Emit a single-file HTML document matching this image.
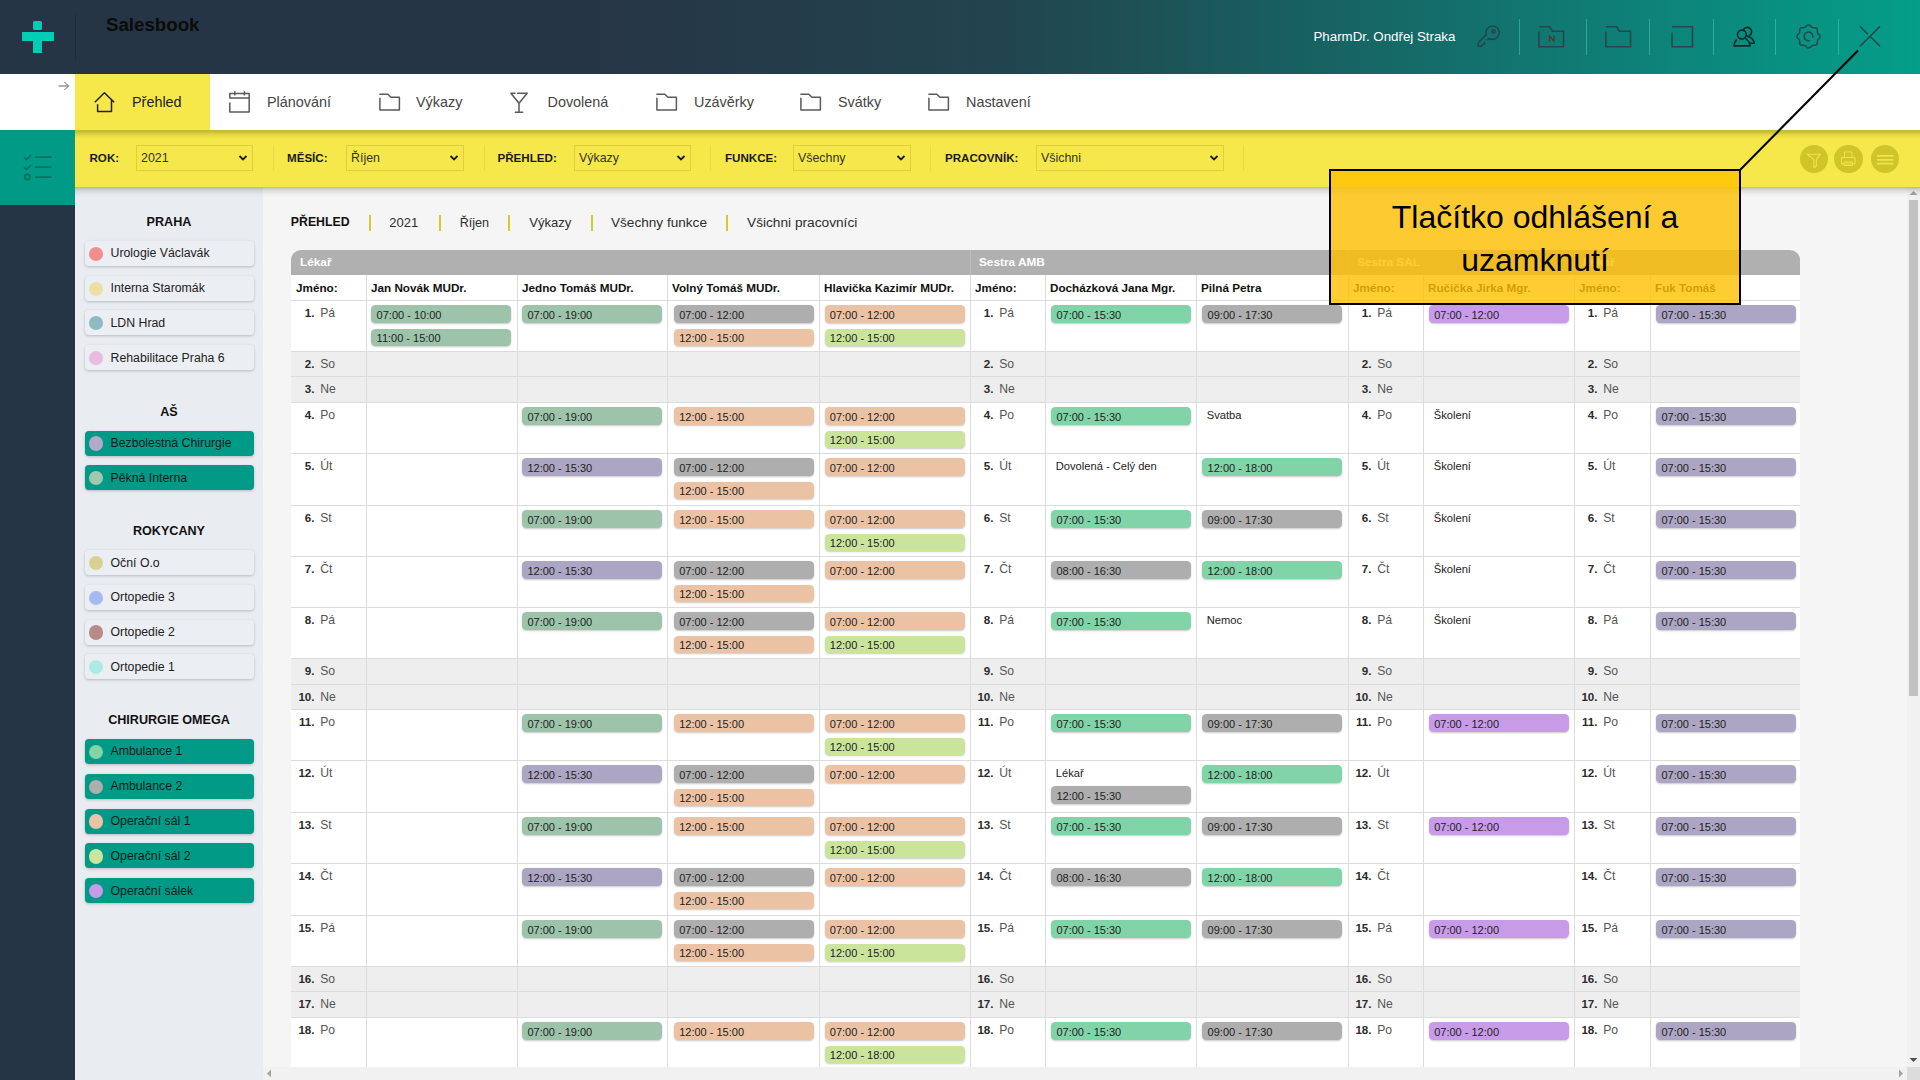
<!DOCTYPE html><html><head><meta charset="utf-8"><style>
*{box-sizing:border-box;margin:0;padding:0}
html,body{width:1920px;height:1080px;overflow:hidden;background:#f5f5f5;font-family:"Liberation Sans", sans-serif;}
.a{position:absolute}
.t{position:absolute;white-space:nowrap;line-height:1}
</style></head><body><div class="a" style="left:0;top:0;width:1920px;height:74px;background:linear-gradient(90deg,#263545 0%,#263545 31%,#22444e 52%,#186060 67.7%,#0f7d75 83.3%,#049e89 100%)"></div><div class="a" style="left:33.1px;top:20.5px;width:9.3px;height:9.4px;border-radius:1.5px;background:#00cdb3"></div><div class="a" style="left:22px;top:32.2px;width:31.8px;height:8.9px;background:#00cdb3"></div><div class="a" style="left:33.1px;top:41px;width:9.3px;height:11.6px;background:#00cdb3"></div><div class="a" style="left:75px;top:14px;width:1px;height:46px;background:#1f2d3b"></div><div class="t" style="left:106px;top:15.5px;font-size:18.7px;font-weight:700;color:#0b0b0b">Salesbook</div><div class="a" style="left:0;top:74px;width:1920px;height:56px;background:#fff"></div><div class="a" style="left:75px;top:74px;width:135px;height:56px;background:#f6e84a"></div><svg class="a" style="left:57px;top:80px" width="13" height="12" viewBox="0 0 13 12"><path d="M1.5 6 H11.5 M7.5 2 L11.5 6 L7.5 10" fill="none" stroke="#666" stroke-width="1"/></svg><svg class="a" style="left:94px;top:91px" width="22" height="22" viewBox="0 0 22 22"><path d="M0.8 11.3 L10.4 1.8 L20.2 11.3 M3.6 13.2 V20.4 H17.5 V9.3" fill="none" stroke="#222" stroke-width="1.5" stroke-linejoin="round"/></svg><div class="t" style="left:132px;top:95px;font-size:14.4px;color:#222">Přehled</div><svg class="a" style="left:229px;top:90px" width="22" height="24" viewBox="0 0 22 24"><path d="M0.8 12.6 V22.1 H20.2 V3.4 H0.8 V8.1 H20.2 M5.8 1.2 V5.4 M15.4 1.2 V5.4" fill="none" stroke="#5a5a5a" stroke-width="1.5" stroke-linejoin="round"/></svg><div class="t" style="left:267px;top:95px;font-size:14.4px;color:#444">Plánování</div><svg class="a" style="left:379px;top:93px" width="22" height="18" viewBox="0 0 22 18"><path d="M0.9 1.3 H8.9 L11.9 4.2 H20.4 V16.9 H0.9 V5.2" fill="none" stroke="#5a5a5a" stroke-width="1.5" stroke-linejoin="round" stroke-linecap="round"/></svg><div class="t" style="left:416px;top:95px;font-size:14.4px;color:#444">Výkazy</div><svg class="a" style="left:510px;top:91px" width="20" height="22" viewBox="0 0 20 22"><path d="M4.9 2.2 H0.9 L9 12.3 L17.2 2.2 H7.6 M9 12.3 V21.2 M5.4 21.2 H12.7" fill="none" stroke="#5a5a5a" stroke-width="1.5" stroke-linejoin="round" stroke-linecap="round"/></svg><div class="t" style="left:547.5px;top:95px;font-size:14.4px;color:#444">Dovolená</div><svg class="a" style="left:656px;top:93px" width="22" height="18" viewBox="0 0 22 18"><path d="M0.9 1.3 H8.9 L11.9 4.2 H20.4 V16.9 H0.9 V5.2" fill="none" stroke="#5a5a5a" stroke-width="1.5" stroke-linejoin="round" stroke-linecap="round"/></svg><div class="t" style="left:694px;top:95px;font-size:14.4px;color:#444">Uzávěrky</div><svg class="a" style="left:800px;top:93px" width="22" height="18" viewBox="0 0 22 18"><path d="M0.9 1.3 H8.9 L11.9 4.2 H20.4 V16.9 H0.9 V5.2" fill="none" stroke="#5a5a5a" stroke-width="1.5" stroke-linejoin="round" stroke-linecap="round"/></svg><div class="t" style="left:838px;top:95px;font-size:14.4px;color:#444">Svátky</div><svg class="a" style="left:928px;top:93px" width="22" height="18" viewBox="0 0 22 18"><path d="M0.9 1.3 H8.9 L11.9 4.2 H20.4 V16.9 H0.9 V5.2" fill="none" stroke="#5a5a5a" stroke-width="1.5" stroke-linejoin="round" stroke-linecap="round"/></svg><div class="t" style="left:966px;top:95px;font-size:14.4px;color:#444">Nastavení</div><div class="a" style="left:75px;top:130px;width:1845px;height:57px;background:#f6e84a"></div><div class="a" style="left:75px;top:130px;width:1845px;height:9px;background:linear-gradient(rgba(80,70,0,0.30) 0%,rgba(80,70,0,0.26) 20%,rgba(80,70,0,0.10) 55%,rgba(80,70,0,0) 100%)"></div><div class="a" style="left:0;top:130px;width:75px;height:75px;background:#009a87"></div><svg class="a" style="left:20px;top:150px" width="36" height="34" viewBox="0 0 36 34"><g fill="none" stroke="#067062" stroke-width="1.75"><path d="M4 7 L6.5 9.5 L11 5"/><path d="M4 17 L6.5 19.5 L11 15"/><circle cx="7.3" cy="27" r="2.6"/><path d="M15 7 H31.5 M15 17 H31.5 M15 27 H31.5"/></g></svg><div class="t" style="left:89.5px;top:152px;font-size:11.6px;font-weight:700;color:#1a1a1a">ROK:</div><div class="t" style="left:287px;top:152px;font-size:11.6px;font-weight:700;color:#1a1a1a">MĚSÍC:</div><div class="t" style="left:497.5px;top:152px;font-size:11.6px;font-weight:700;color:#1a1a1a">PŘEHLED:</div><div class="t" style="left:725px;top:152px;font-size:11.6px;font-weight:700;color:#1a1a1a">FUNKCE:</div><div class="t" style="left:945px;top:152px;font-size:11.6px;font-weight:700;color:#1a1a1a">PRACOVNÍK:</div><div class="a" style="left:136px;top:145px;width:117px;height:26px;border:1px solid #ddd03c"></div><div class="t" style="left:141px;top:152px;font-size:12.4px;color:#333">2021</div><svg class="a" style="left:238px;top:154px" width="10" height="8" viewBox="0 0 10 8"><path d="M1.5 2 L5 5.5 L8.5 2" fill="none" stroke="#1a1a1a" stroke-width="1.8"/></svg><div class="a" style="left:346px;top:145px;width:118px;height:26px;border:1px solid #ddd03c"></div><div class="t" style="left:351px;top:152px;font-size:12.4px;color:#333">Říjen</div><svg class="a" style="left:449px;top:154px" width="10" height="8" viewBox="0 0 10 8"><path d="M1.5 2 L5 5.5 L8.5 2" fill="none" stroke="#1a1a1a" stroke-width="1.8"/></svg><div class="a" style="left:574px;top:145px;width:117px;height:26px;border:1px solid #ddd03c"></div><div class="t" style="left:579px;top:152px;font-size:12.4px;color:#333">Výkazy</div><svg class="a" style="left:676px;top:154px" width="10" height="8" viewBox="0 0 10 8"><path d="M1.5 2 L5 5.5 L8.5 2" fill="none" stroke="#1a1a1a" stroke-width="1.8"/></svg><div class="a" style="left:793px;top:145px;width:117.5px;height:26px;border:1px solid #ddd03c"></div><div class="t" style="left:798px;top:152px;font-size:12.4px;color:#333">Všechny</div><svg class="a" style="left:895.5px;top:154px" width="10" height="8" viewBox="0 0 10 8"><path d="M1.5 2 L5 5.5 L8.5 2" fill="none" stroke="#1a1a1a" stroke-width="1.8"/></svg><div class="a" style="left:1036px;top:145px;width:188px;height:26px;border:1px solid #ddd03c"></div><div class="t" style="left:1041px;top:152px;font-size:12.4px;color:#333">Všichni</div><svg class="a" style="left:1209px;top:154px" width="10" height="8" viewBox="0 0 10 8"><path d="M1.5 2 L5 5.5 L8.5 2" fill="none" stroke="#1a1a1a" stroke-width="1.8"/></svg><div class="a" style="left:272.5px;top:145px;width:1px;height:26px;background:#e8da45"></div><div class="a" style="left:483.75px;top:145px;width:1px;height:26px;background:#e8da45"></div><div class="a" style="left:709.5px;top:145px;width:1px;height:26px;background:#e8da45"></div><div class="a" style="left:930px;top:145px;width:1px;height:26px;background:#e8da45"></div><div class="a" style="left:1243px;top:145px;width:1px;height:26px;background:#e8da45"></div><div class="a" style="left:1799.5px;top:144.60000000000002px;width:28.4px;height:28.4px;border-radius:50%;background:#cfc42a"></div><div class="a" style="left:1834.3999999999999px;top:144.60000000000002px;width:28.4px;height:28.4px;border-radius:50%;background:#cfc42a"></div><div class="a" style="left:1870.8px;top:144.60000000000002px;width:28.4px;height:28.4px;border-radius:50%;background:#cfc42a"></div><svg class="a" style="left:1799.5px;top:144.6px" width="28.4" height="28.4" viewBox="0 0 28.4 28.4"><path d="M7.2 9.2 H20.3 L16.3 14.6 V21.3 L13.9 22.4 V14.6 Z" fill="none" stroke="#f1e44a" stroke-width="1.1" stroke-linejoin="round"/></svg><svg class="a" style="left:1834.4px;top:144.6px" width="28.4" height="28.4" viewBox="0 0 28.4 28.4"><path d="M10.5 13 V7 H18 V13 M7.5 15.5 V12.5 H21 V19 H7.5 V15.5 M10 17 H18.5 V20.5 H10 Z" fill="none" stroke="#f1e44a" stroke-width="1"/></svg><svg class="a" style="left:1870.8px;top:144.6px" width="28.4" height="28.4" viewBox="0 0 28.4 28.4"><path d="M6 10.9 H22.5 M6 14.8 H22.5 M6 18.7 H22.5" fill="none" stroke="#f1e44a" stroke-width="1.7"/></svg><div class="a" style="left:0;top:205px;width:75px;height:875px;background:#263545"></div><div class="a" style="left:75px;top:187px;width:188px;height:893px;background:#e9edf1"></div><div class="t" style="left:75px;width:188px;text-align:center;top:215.8px;font-size:12.6px;font-weight:700;color:#111">PRAHA</div><div class="a" style="left:85px;top:240.8px;width:168.5px;height:25px;border-radius:4px;background:#ebeef2;box-shadow:0 1px 3px rgba(0,0,0,0.22)"></div><div class="a" style="left:89px;top:246.60000000000002px;width:14.4px;height:14.4px;border-radius:50%;background:#f38c8c"></div><div class="t" style="left:110.5px;top:247.3px;font-size:12.3px;color:#222">Urologie Václavák</div><div class="a" style="left:85px;top:275.7px;width:168.5px;height:25px;border-radius:4px;background:#ebeef2;box-shadow:0 1px 3px rgba(0,0,0,0.22)"></div><div class="a" style="left:89px;top:281.5px;width:14.4px;height:14.4px;border-radius:50%;background:#ebe0a2"></div><div class="t" style="left:110.5px;top:282.2px;font-size:12.3px;color:#222">Interna Staromák</div><div class="a" style="left:85px;top:310.1px;width:168.5px;height:25px;border-radius:4px;background:#ebeef2;box-shadow:0 1px 3px rgba(0,0,0,0.22)"></div><div class="a" style="left:89px;top:315.90000000000003px;width:14.4px;height:14.4px;border-radius:50%;background:#8fbac1"></div><div class="t" style="left:110.5px;top:316.6px;font-size:12.3px;color:#222">LDN Hrad</div><div class="a" style="left:85px;top:345.0px;width:168.5px;height:25px;border-radius:4px;background:#ebeef2;box-shadow:0 1px 3px rgba(0,0,0,0.22)"></div><div class="a" style="left:89px;top:350.8px;width:14.4px;height:14.4px;border-radius:50%;background:#e8bbdf"></div><div class="t" style="left:110.5px;top:351.5px;font-size:12.3px;color:#222">Rehabilitace Praha 6</div><div class="t" style="left:75px;width:188px;text-align:center;top:405.5px;font-size:12.6px;font-weight:700;color:#111">AŠ</div><div class="a" style="left:85px;top:430.5px;width:168.5px;height:25px;border-radius:4px;background:#009a87;box-shadow:0 1px 3px rgba(0,0,0,0.22)"></div><div class="a" style="left:89px;top:436.3px;width:14.4px;height:14.4px;border-radius:50%;background:#b2a9c9"></div><div class="t" style="left:110.5px;top:437.0px;font-size:12.3px;color:#081c18">Bezbolestná Chirurgie</div><div class="a" style="left:85px;top:465.1px;width:168.5px;height:25px;border-radius:4px;background:#009a87;box-shadow:0 1px 3px rgba(0,0,0,0.22)"></div><div class="a" style="left:89px;top:470.90000000000003px;width:14.4px;height:14.4px;border-radius:50%;background:#a3c6ae"></div><div class="t" style="left:110.5px;top:471.6px;font-size:12.3px;color:#081c18">Pěkná Interna</div><div class="t" style="left:75px;width:188px;text-align:center;top:525.0px;font-size:12.6px;font-weight:700;color:#111">ROKYCANY</div><div class="a" style="left:85px;top:550.0px;width:168.5px;height:25px;border-radius:4px;background:#ebeef2;box-shadow:0 1px 3px rgba(0,0,0,0.22)"></div><div class="a" style="left:89px;top:555.8px;width:14.4px;height:14.4px;border-radius:50%;background:#d9d18f"></div><div class="t" style="left:110.5px;top:556.5px;font-size:12.3px;color:#222">Oční O.o</div><div class="a" style="left:85px;top:584.7px;width:168.5px;height:25px;border-radius:4px;background:#ebeef2;box-shadow:0 1px 3px rgba(0,0,0,0.22)"></div><div class="a" style="left:89px;top:590.5px;width:14.4px;height:14.4px;border-radius:50%;background:#a6baf0"></div><div class="t" style="left:110.5px;top:591.2px;font-size:12.3px;color:#222">Ortopedie 3</div><div class="a" style="left:85px;top:619.5px;width:168.5px;height:25px;border-radius:4px;background:#ebeef2;box-shadow:0 1px 3px rgba(0,0,0,0.22)"></div><div class="a" style="left:89px;top:625.3px;width:14.4px;height:14.4px;border-radius:50%;background:#b98a8a"></div><div class="t" style="left:110.5px;top:626.0px;font-size:12.3px;color:#222">Ortopedie 2</div><div class="a" style="left:85px;top:654.0px;width:168.5px;height:25px;border-radius:4px;background:#ebeef2;box-shadow:0 1px 3px rgba(0,0,0,0.22)"></div><div class="a" style="left:89px;top:659.8px;width:14.4px;height:14.4px;border-radius:50%;background:#aaece1"></div><div class="t" style="left:110.5px;top:660.5px;font-size:12.3px;color:#222">Ortopedie 1</div><div class="t" style="left:75px;width:188px;text-align:center;top:713.8px;font-size:12.6px;font-weight:700;color:#111">CHIRURGIE OMEGA</div><div class="a" style="left:85px;top:738.8px;width:168.5px;height:25px;border-radius:4px;background:#009a87;box-shadow:0 1px 3px rgba(0,0,0,0.22)"></div><div class="a" style="left:89px;top:744.5999999999999px;width:14.4px;height:14.4px;border-radius:50%;background:#82d4a8"></div><div class="t" style="left:110.5px;top:745.3px;font-size:12.3px;color:#081c18">Ambulance 1</div><div class="a" style="left:85px;top:773.7px;width:168.5px;height:25px;border-radius:4px;background:#009a87;box-shadow:0 1px 3px rgba(0,0,0,0.22)"></div><div class="a" style="left:89px;top:779.5px;width:14.4px;height:14.4px;border-radius:50%;background:#aeaeae"></div><div class="t" style="left:110.5px;top:780.2px;font-size:12.3px;color:#081c18">Ambulance 2</div><div class="a" style="left:85px;top:808.6px;width:168.5px;height:25px;border-radius:4px;background:#009a87;box-shadow:0 1px 3px rgba(0,0,0,0.22)"></div><div class="a" style="left:89px;top:814.4px;width:14.4px;height:14.4px;border-radius:50%;background:#ecc3a6"></div><div class="t" style="left:110.5px;top:815.1px;font-size:12.3px;color:#081c18">Operační sál 1</div><div class="a" style="left:85px;top:843.4px;width:168.5px;height:25px;border-radius:4px;background:#009a87;box-shadow:0 1px 3px rgba(0,0,0,0.22)"></div><div class="a" style="left:89px;top:849.1999999999999px;width:14.4px;height:14.4px;border-radius:50%;background:#cbe59d"></div><div class="t" style="left:110.5px;top:849.9px;font-size:12.3px;color:#081c18">Operační sál 2</div><div class="a" style="left:85px;top:878.1px;width:168.5px;height:25px;border-radius:4px;background:#009a87;box-shadow:0 1px 3px rgba(0,0,0,0.22)"></div><div class="a" style="left:89px;top:883.9px;width:14.4px;height:14.4px;border-radius:50%;background:#c99ce9"></div><div class="t" style="left:110.5px;top:884.6px;font-size:12.3px;color:#081c18">Operační sálek</div><div class="a" style="left:1907px;top:187px;width:13px;height:880px;background:#f1f1f1"></div><div class="a" style="left:1909px;top:200px;width:9px;height:496px;background:#c1c1c1"></div><svg class="a" style="left:1909px;top:189px" width="9" height="8" viewBox="0 0 9 8"><path d="M0.5 6 L4.5 2 L8.5 6 Z" fill="#a3a3a3"/></svg><svg class="a" style="left:1909px;top:1056px" width="9" height="8" viewBox="0 0 9 8"><path d="M0.5 2 L4.5 6 L8.5 2 Z" fill="#505050"/></svg><div class="a" style="left:263px;top:1067px;width:1644px;height:13px;background:#f1f1f1"></div><div class="a" style="left:1907px;top:1067px;width:13px;height:13px;background:#dcdcdc"></div><svg class="a" style="left:265px;top:1069px" width="8" height="9" viewBox="0 0 8 9"><path d="M6 0.5 L2 4.5 L6 8.5 Z" fill="#a3a3a3"/></svg><svg class="a" style="left:1897px;top:1069px" width="8" height="9" viewBox="0 0 8 9"><path d="M2 0.5 L6 4.5 L2 8.5 Z" fill="#a3a3a3"/></svg><div class="a" style="left:75px;top:187px;width:1845px;height:10px;background:linear-gradient(rgba(40,40,90,0.30),rgba(0,0,0,0.10) 35%,rgba(0,0,0,0.03) 70%,rgba(0,0,0,0))"></div><div class="t" style="left:290.8px;top:216px;font-size:12.3px;font-weight:700;color:#111">PŘEHLED</div><div class="t" style="left:389.2px;top:216.0px;font-size:13.0px;font-weight:400;color:#2e2e2e">2021</div><div class="t" style="left:459.7px;top:216.8px;font-size:12.6px;font-weight:400;color:#2e2e2e">Říjen</div><div class="t" style="left:529.2px;top:216.0px;font-size:13.1px;font-weight:400;color:#2e2e2e">Výkazy</div><div class="t" style="left:611px;top:216.0px;font-size:13.6px;font-weight:400;color:#2e2e2e">Všechny funkce</div><div class="t" style="left:747px;top:216.0px;font-size:13.7px;font-weight:400;color:#2e2e2e">Všichni pracovníci</div><div class="a" style="left:368.7px;top:214.7px;width:2px;height:16px;background:#d6c92e"></div><div class="a" style="left:439px;top:214.7px;width:2px;height:16px;background:#d6c92e"></div><div class="a" style="left:508.2px;top:214.7px;width:2px;height:16px;background:#d6c92e"></div><div class="a" style="left:590.7px;top:214.7px;width:2px;height:16px;background:#d6c92e"></div><div class="a" style="left:726px;top:214.7px;width:2px;height:16px;background:#d6c92e"></div><div class="a" style="left:291.0px;top:250.0px;width:1509.3px;height:817.0px;overflow:hidden;border-radius:10px 10px 0 0"><div class="a" style="left:0;top:0;width:1509.3px;height:25px;background:#b0b0b0"></div><div class="t" style="left:9.0px;top:7px;font-size:11.8px;font-weight:700;color:#fff">Lékař</div><div class="a" style="left:679.0px;top:0;width:1px;height:25px;background:#bdbdbd"></div><div class="t" style="left:688.0px;top:7px;font-size:11.8px;font-weight:700;color:#fff">Sestra AMB</div><div class="a" style="left:1057.0px;top:0;width:1px;height:25px;background:#bdbdbd"></div><div class="t" style="left:1066.0px;top:7px;font-size:11.8px;font-weight:700;color:#fff">Sestra SAL</div><div class="a" style="left:1283.0px;top:0;width:1px;height:25px;background:#bdbdbd"></div><div class="t" style="left:1292.0px;top:7px;font-size:11.8px;font-weight:700;color:#fff">Lékař</div><div class="a" style="left:0;top:25.0px;width:1509.3px;height:25.19999999999999px;background:#fff"></div><div class="a" style="left:0;top:50.0px;width:1509.3px;height:51px;background:#ffffff"></div><div class="a" style="left:0;top:101.0px;width:1509.3px;height:25px;background:#eeeeee"></div><div class="a" style="left:0;top:126.0px;width:1509.3px;height:26px;background:#eeeeee"></div><div class="a" style="left:0;top:152.0px;width:1509.3px;height:51px;background:#ffffff"></div><div class="a" style="left:0;top:203.0px;width:1509.3px;height:52px;background:#ffffff"></div><div class="a" style="left:0;top:255.0px;width:1509.3px;height:51px;background:#ffffff"></div><div class="a" style="left:0;top:306.0px;width:1509.3px;height:51px;background:#ffffff"></div><div class="a" style="left:0;top:357.0px;width:1509.3px;height:51px;background:#ffffff"></div><div class="a" style="left:0;top:408.0px;width:1509.3px;height:26px;background:#eeeeee"></div><div class="a" style="left:0;top:434.0px;width:1509.3px;height:25px;background:#eeeeee"></div><div class="a" style="left:0;top:459.0px;width:1509.3px;height:51px;background:#ffffff"></div><div class="a" style="left:0;top:510.0px;width:1509.3px;height:52px;background:#ffffff"></div><div class="a" style="left:0;top:562.0px;width:1509.3px;height:51px;background:#ffffff"></div><div class="a" style="left:0;top:613.0px;width:1509.3px;height:52px;background:#ffffff"></div><div class="a" style="left:0;top:665.0px;width:1509.3px;height:51px;background:#ffffff"></div><div class="a" style="left:0;top:716.0px;width:1509.3px;height:25px;background:#eeeeee"></div><div class="a" style="left:0;top:741.0px;width:1509.3px;height:26px;background:#eeeeee"></div><div class="a" style="left:0;top:767.0px;width:1509.3px;height:50px;background:#ffffff"></div><div class="a" style="left:0;top:50.0px;width:1509.3px;height:1px;background:#dcdcdc"></div><div class="a" style="left:0;top:101.0px;width:1509.3px;height:1px;background:#dcdcdc"></div><div class="a" style="left:0;top:126.0px;width:1509.3px;height:1px;background:#dcdcdc"></div><div class="a" style="left:0;top:152.0px;width:1509.3px;height:1px;background:#dcdcdc"></div><div class="a" style="left:0;top:203.0px;width:1509.3px;height:1px;background:#dcdcdc"></div><div class="a" style="left:0;top:255.0px;width:1509.3px;height:1px;background:#dcdcdc"></div><div class="a" style="left:0;top:306.0px;width:1509.3px;height:1px;background:#dcdcdc"></div><div class="a" style="left:0;top:357.0px;width:1509.3px;height:1px;background:#dcdcdc"></div><div class="a" style="left:0;top:408.0px;width:1509.3px;height:1px;background:#dcdcdc"></div><div class="a" style="left:0;top:434.0px;width:1509.3px;height:1px;background:#dcdcdc"></div><div class="a" style="left:0;top:459.0px;width:1509.3px;height:1px;background:#dcdcdc"></div><div class="a" style="left:0;top:510.0px;width:1509.3px;height:1px;background:#dcdcdc"></div><div class="a" style="left:0;top:562.0px;width:1509.3px;height:1px;background:#dcdcdc"></div><div class="a" style="left:0;top:613.0px;width:1509.3px;height:1px;background:#dcdcdc"></div><div class="a" style="left:0;top:665.0px;width:1509.3px;height:1px;background:#dcdcdc"></div><div class="a" style="left:0;top:716.0px;width:1509.3px;height:1px;background:#dcdcdc"></div><div class="a" style="left:0;top:741.0px;width:1509.3px;height:1px;background:#dcdcdc"></div><div class="a" style="left:0;top:767.0px;width:1509.3px;height:1px;background:#dcdcdc"></div><div class="a" style="left:75.0px;top:25.0px;width:1px;height:792.0px;background:#dcdcdc"></div><div class="a" style="left:226.0px;top:25.0px;width:1px;height:792.0px;background:#dcdcdc"></div><div class="a" style="left:376.0px;top:25.0px;width:1px;height:792.0px;background:#dcdcdc"></div><div class="a" style="left:528.0px;top:25.0px;width:1px;height:792.0px;background:#dcdcdc"></div><div class="a" style="left:679.0px;top:25.0px;width:1px;height:792.0px;background:#dcdcdc"></div><div class="a" style="left:754.0px;top:25.0px;width:1px;height:792.0px;background:#dcdcdc"></div><div class="a" style="left:905.0px;top:25.0px;width:1px;height:792.0px;background:#dcdcdc"></div><div class="a" style="left:1057.0px;top:25.0px;width:1px;height:792.0px;background:#dcdcdc"></div><div class="a" style="left:1132.0px;top:25.0px;width:1px;height:792.0px;background:#dcdcdc"></div><div class="a" style="left:1283.0px;top:25.0px;width:1px;height:792.0px;background:#dcdcdc"></div><div class="a" style="left:1359.0px;top:25.0px;width:1px;height:792.0px;background:#dcdcdc"></div><div class="t" style="left:5.0px;top:31.8px;font-size:11.7px;font-weight:700;color:#111">Jméno:</div><div class="t" style="left:80.0px;top:31.8px;font-size:11.7px;font-weight:700;color:#111">Jan Novák MUDr.</div><div class="t" style="left:231.0px;top:31.8px;font-size:11.7px;font-weight:700;color:#111">Jedno Tomáš MUDr.</div><div class="t" style="left:381.0px;top:31.8px;font-size:11.7px;font-weight:700;color:#111">Volný Tomáš MUDr.</div><div class="t" style="left:533.0px;top:31.8px;font-size:11.7px;font-weight:700;color:#111">Hlavička Kazimír MUDr.</div><div class="t" style="left:684.0px;top:31.8px;font-size:11.7px;font-weight:700;color:#111">Jméno:</div><div class="t" style="left:759.0px;top:31.8px;font-size:11.7px;font-weight:700;color:#111">Docházková Jana Mgr.</div><div class="t" style="left:910.0px;top:31.8px;font-size:11.7px;font-weight:700;color:#111">Pilná Petra</div><div class="t" style="left:1062.0px;top:31.8px;font-size:11.7px;font-weight:700;color:#111">Jméno:</div><div class="t" style="left:1137.0px;top:31.8px;font-size:11.7px;font-weight:700;color:#111">Ručička Jirka Mgr.</div><div class="t" style="left:1288.0px;top:31.8px;font-size:11.7px;font-weight:700;color:#111">Jméno:</div><div class="t" style="left:1364.0px;top:31.8px;font-size:11.7px;font-weight:700;color:#111">Fuk Tomáš</div><div class="t" style="left:0.0px;width:23.5px;text-align:right;top:56.8px;font-size:11.6px;font-weight:700;color:#2b2b2b">1.</div><div class="t" style="left:29.2px;top:56.8px;font-size:12.2px;color:#555">Pá</div><div class="t" style="left:0.0px;width:23.5px;text-align:right;top:108.0px;font-size:11.6px;font-weight:700;color:#2b2b2b">2.</div><div class="t" style="left:29.2px;top:108.0px;font-size:12.2px;color:#555">So</div><div class="t" style="left:0.0px;width:23.5px;text-align:right;top:133.0px;font-size:11.6px;font-weight:700;color:#2b2b2b">3.</div><div class="t" style="left:29.2px;top:133.0px;font-size:12.2px;color:#555">Ne</div><div class="t" style="left:0.0px;width:23.5px;text-align:right;top:158.8px;font-size:11.6px;font-weight:700;color:#2b2b2b">4.</div><div class="t" style="left:29.2px;top:158.8px;font-size:12.2px;color:#555">Po</div><div class="t" style="left:0.0px;width:23.5px;text-align:right;top:209.8px;font-size:11.6px;font-weight:700;color:#2b2b2b">5.</div><div class="t" style="left:29.2px;top:209.8px;font-size:12.2px;color:#555">Út</div><div class="t" style="left:0.0px;width:23.5px;text-align:right;top:261.8px;font-size:11.6px;font-weight:700;color:#2b2b2b">6.</div><div class="t" style="left:29.2px;top:261.8px;font-size:12.2px;color:#555">St</div><div class="t" style="left:0.0px;width:23.5px;text-align:right;top:312.8px;font-size:11.6px;font-weight:700;color:#2b2b2b">7.</div><div class="t" style="left:29.2px;top:312.8px;font-size:12.2px;color:#555">Čt</div><div class="t" style="left:0.0px;width:23.5px;text-align:right;top:363.8px;font-size:11.6px;font-weight:700;color:#2b2b2b">8.</div><div class="t" style="left:29.2px;top:363.8px;font-size:12.2px;color:#555">Pá</div><div class="t" style="left:0.0px;width:23.5px;text-align:right;top:415.0px;font-size:11.6px;font-weight:700;color:#2b2b2b">9.</div><div class="t" style="left:29.2px;top:415.0px;font-size:12.2px;color:#555">So</div><div class="t" style="left:0.0px;width:23.5px;text-align:right;top:441.0px;font-size:11.6px;font-weight:700;color:#2b2b2b">10.</div><div class="t" style="left:29.2px;top:441.0px;font-size:12.2px;color:#555">Ne</div><div class="t" style="left:0.0px;width:23.5px;text-align:right;top:465.8px;font-size:11.6px;font-weight:700;color:#2b2b2b">11.</div><div class="t" style="left:29.2px;top:465.8px;font-size:12.2px;color:#555">Po</div><div class="t" style="left:0.0px;width:23.5px;text-align:right;top:516.8px;font-size:11.6px;font-weight:700;color:#2b2b2b">12.</div><div class="t" style="left:29.2px;top:516.8px;font-size:12.2px;color:#555">Út</div><div class="t" style="left:0.0px;width:23.5px;text-align:right;top:568.8px;font-size:11.6px;font-weight:700;color:#2b2b2b">13.</div><div class="t" style="left:29.2px;top:568.8px;font-size:12.2px;color:#555">St</div><div class="t" style="left:0.0px;width:23.5px;text-align:right;top:619.8px;font-size:11.6px;font-weight:700;color:#2b2b2b">14.</div><div class="t" style="left:29.2px;top:619.8px;font-size:12.2px;color:#555">Čt</div><div class="t" style="left:0.0px;width:23.5px;text-align:right;top:671.8px;font-size:11.6px;font-weight:700;color:#2b2b2b">15.</div><div class="t" style="left:29.2px;top:671.8px;font-size:12.2px;color:#555">Pá</div><div class="t" style="left:0.0px;width:23.5px;text-align:right;top:723.0px;font-size:11.6px;font-weight:700;color:#2b2b2b">16.</div><div class="t" style="left:29.2px;top:723.0px;font-size:12.2px;color:#555">So</div><div class="t" style="left:0.0px;width:23.5px;text-align:right;top:748.0px;font-size:11.6px;font-weight:700;color:#2b2b2b">17.</div><div class="t" style="left:29.2px;top:748.0px;font-size:12.2px;color:#555">Ne</div><div class="t" style="left:0.0px;width:23.5px;text-align:right;top:773.8px;font-size:11.6px;font-weight:700;color:#2b2b2b">18.</div><div class="t" style="left:29.2px;top:773.8px;font-size:12.2px;color:#555">Po</div><div class="t" style="left:679.0px;width:23.5px;text-align:right;top:56.8px;font-size:11.6px;font-weight:700;color:#2b2b2b">1.</div><div class="t" style="left:708.2px;top:56.8px;font-size:12.2px;color:#555">Pá</div><div class="t" style="left:679.0px;width:23.5px;text-align:right;top:108.0px;font-size:11.6px;font-weight:700;color:#2b2b2b">2.</div><div class="t" style="left:708.2px;top:108.0px;font-size:12.2px;color:#555">So</div><div class="t" style="left:679.0px;width:23.5px;text-align:right;top:133.0px;font-size:11.6px;font-weight:700;color:#2b2b2b">3.</div><div class="t" style="left:708.2px;top:133.0px;font-size:12.2px;color:#555">Ne</div><div class="t" style="left:679.0px;width:23.5px;text-align:right;top:158.8px;font-size:11.6px;font-weight:700;color:#2b2b2b">4.</div><div class="t" style="left:708.2px;top:158.8px;font-size:12.2px;color:#555">Po</div><div class="t" style="left:679.0px;width:23.5px;text-align:right;top:209.8px;font-size:11.6px;font-weight:700;color:#2b2b2b">5.</div><div class="t" style="left:708.2px;top:209.8px;font-size:12.2px;color:#555">Út</div><div class="t" style="left:679.0px;width:23.5px;text-align:right;top:261.8px;font-size:11.6px;font-weight:700;color:#2b2b2b">6.</div><div class="t" style="left:708.2px;top:261.8px;font-size:12.2px;color:#555">St</div><div class="t" style="left:679.0px;width:23.5px;text-align:right;top:312.8px;font-size:11.6px;font-weight:700;color:#2b2b2b">7.</div><div class="t" style="left:708.2px;top:312.8px;font-size:12.2px;color:#555">Čt</div><div class="t" style="left:679.0px;width:23.5px;text-align:right;top:363.8px;font-size:11.6px;font-weight:700;color:#2b2b2b">8.</div><div class="t" style="left:708.2px;top:363.8px;font-size:12.2px;color:#555">Pá</div><div class="t" style="left:679.0px;width:23.5px;text-align:right;top:415.0px;font-size:11.6px;font-weight:700;color:#2b2b2b">9.</div><div class="t" style="left:708.2px;top:415.0px;font-size:12.2px;color:#555">So</div><div class="t" style="left:679.0px;width:23.5px;text-align:right;top:441.0px;font-size:11.6px;font-weight:700;color:#2b2b2b">10.</div><div class="t" style="left:708.2px;top:441.0px;font-size:12.2px;color:#555">Ne</div><div class="t" style="left:679.0px;width:23.5px;text-align:right;top:465.8px;font-size:11.6px;font-weight:700;color:#2b2b2b">11.</div><div class="t" style="left:708.2px;top:465.8px;font-size:12.2px;color:#555">Po</div><div class="t" style="left:679.0px;width:23.5px;text-align:right;top:516.8px;font-size:11.6px;font-weight:700;color:#2b2b2b">12.</div><div class="t" style="left:708.2px;top:516.8px;font-size:12.2px;color:#555">Út</div><div class="t" style="left:679.0px;width:23.5px;text-align:right;top:568.8px;font-size:11.6px;font-weight:700;color:#2b2b2b">13.</div><div class="t" style="left:708.2px;top:568.8px;font-size:12.2px;color:#555">St</div><div class="t" style="left:679.0px;width:23.5px;text-align:right;top:619.8px;font-size:11.6px;font-weight:700;color:#2b2b2b">14.</div><div class="t" style="left:708.2px;top:619.8px;font-size:12.2px;color:#555">Čt</div><div class="t" style="left:679.0px;width:23.5px;text-align:right;top:671.8px;font-size:11.6px;font-weight:700;color:#2b2b2b">15.</div><div class="t" style="left:708.2px;top:671.8px;font-size:12.2px;color:#555">Pá</div><div class="t" style="left:679.0px;width:23.5px;text-align:right;top:723.0px;font-size:11.6px;font-weight:700;color:#2b2b2b">16.</div><div class="t" style="left:708.2px;top:723.0px;font-size:12.2px;color:#555">So</div><div class="t" style="left:679.0px;width:23.5px;text-align:right;top:748.0px;font-size:11.6px;font-weight:700;color:#2b2b2b">17.</div><div class="t" style="left:708.2px;top:748.0px;font-size:12.2px;color:#555">Ne</div><div class="t" style="left:679.0px;width:23.5px;text-align:right;top:773.8px;font-size:11.6px;font-weight:700;color:#2b2b2b">18.</div><div class="t" style="left:708.2px;top:773.8px;font-size:12.2px;color:#555">Po</div><div class="t" style="left:1057.0px;width:23.5px;text-align:right;top:56.8px;font-size:11.6px;font-weight:700;color:#2b2b2b">1.</div><div class="t" style="left:1086.2px;top:56.8px;font-size:12.2px;color:#555">Pá</div><div class="t" style="left:1057.0px;width:23.5px;text-align:right;top:108.0px;font-size:11.6px;font-weight:700;color:#2b2b2b">2.</div><div class="t" style="left:1086.2px;top:108.0px;font-size:12.2px;color:#555">So</div><div class="t" style="left:1057.0px;width:23.5px;text-align:right;top:133.0px;font-size:11.6px;font-weight:700;color:#2b2b2b">3.</div><div class="t" style="left:1086.2px;top:133.0px;font-size:12.2px;color:#555">Ne</div><div class="t" style="left:1057.0px;width:23.5px;text-align:right;top:158.8px;font-size:11.6px;font-weight:700;color:#2b2b2b">4.</div><div class="t" style="left:1086.2px;top:158.8px;font-size:12.2px;color:#555">Po</div><div class="t" style="left:1057.0px;width:23.5px;text-align:right;top:209.8px;font-size:11.6px;font-weight:700;color:#2b2b2b">5.</div><div class="t" style="left:1086.2px;top:209.8px;font-size:12.2px;color:#555">Út</div><div class="t" style="left:1057.0px;width:23.5px;text-align:right;top:261.8px;font-size:11.6px;font-weight:700;color:#2b2b2b">6.</div><div class="t" style="left:1086.2px;top:261.8px;font-size:12.2px;color:#555">St</div><div class="t" style="left:1057.0px;width:23.5px;text-align:right;top:312.8px;font-size:11.6px;font-weight:700;color:#2b2b2b">7.</div><div class="t" style="left:1086.2px;top:312.8px;font-size:12.2px;color:#555">Čt</div><div class="t" style="left:1057.0px;width:23.5px;text-align:right;top:363.8px;font-size:11.6px;font-weight:700;color:#2b2b2b">8.</div><div class="t" style="left:1086.2px;top:363.8px;font-size:12.2px;color:#555">Pá</div><div class="t" style="left:1057.0px;width:23.5px;text-align:right;top:415.0px;font-size:11.6px;font-weight:700;color:#2b2b2b">9.</div><div class="t" style="left:1086.2px;top:415.0px;font-size:12.2px;color:#555">So</div><div class="t" style="left:1057.0px;width:23.5px;text-align:right;top:441.0px;font-size:11.6px;font-weight:700;color:#2b2b2b">10.</div><div class="t" style="left:1086.2px;top:441.0px;font-size:12.2px;color:#555">Ne</div><div class="t" style="left:1057.0px;width:23.5px;text-align:right;top:465.8px;font-size:11.6px;font-weight:700;color:#2b2b2b">11.</div><div class="t" style="left:1086.2px;top:465.8px;font-size:12.2px;color:#555">Po</div><div class="t" style="left:1057.0px;width:23.5px;text-align:right;top:516.8px;font-size:11.6px;font-weight:700;color:#2b2b2b">12.</div><div class="t" style="left:1086.2px;top:516.8px;font-size:12.2px;color:#555">Út</div><div class="t" style="left:1057.0px;width:23.5px;text-align:right;top:568.8px;font-size:11.6px;font-weight:700;color:#2b2b2b">13.</div><div class="t" style="left:1086.2px;top:568.8px;font-size:12.2px;color:#555">St</div><div class="t" style="left:1057.0px;width:23.5px;text-align:right;top:619.8px;font-size:11.6px;font-weight:700;color:#2b2b2b">14.</div><div class="t" style="left:1086.2px;top:619.8px;font-size:12.2px;color:#555">Čt</div><div class="t" style="left:1057.0px;width:23.5px;text-align:right;top:671.8px;font-size:11.6px;font-weight:700;color:#2b2b2b">15.</div><div class="t" style="left:1086.2px;top:671.8px;font-size:12.2px;color:#555">Pá</div><div class="t" style="left:1057.0px;width:23.5px;text-align:right;top:723.0px;font-size:11.6px;font-weight:700;color:#2b2b2b">16.</div><div class="t" style="left:1086.2px;top:723.0px;font-size:12.2px;color:#555">So</div><div class="t" style="left:1057.0px;width:23.5px;text-align:right;top:748.0px;font-size:11.6px;font-weight:700;color:#2b2b2b">17.</div><div class="t" style="left:1086.2px;top:748.0px;font-size:12.2px;color:#555">Ne</div><div class="t" style="left:1057.0px;width:23.5px;text-align:right;top:773.8px;font-size:11.6px;font-weight:700;color:#2b2b2b">18.</div><div class="t" style="left:1086.2px;top:773.8px;font-size:12.2px;color:#555">Po</div><div class="t" style="left:1283.0px;width:23.5px;text-align:right;top:56.8px;font-size:11.6px;font-weight:700;color:#2b2b2b">1.</div><div class="t" style="left:1312.2px;top:56.8px;font-size:12.2px;color:#555">Pá</div><div class="t" style="left:1283.0px;width:23.5px;text-align:right;top:108.0px;font-size:11.6px;font-weight:700;color:#2b2b2b">2.</div><div class="t" style="left:1312.2px;top:108.0px;font-size:12.2px;color:#555">So</div><div class="t" style="left:1283.0px;width:23.5px;text-align:right;top:133.0px;font-size:11.6px;font-weight:700;color:#2b2b2b">3.</div><div class="t" style="left:1312.2px;top:133.0px;font-size:12.2px;color:#555">Ne</div><div class="t" style="left:1283.0px;width:23.5px;text-align:right;top:158.8px;font-size:11.6px;font-weight:700;color:#2b2b2b">4.</div><div class="t" style="left:1312.2px;top:158.8px;font-size:12.2px;color:#555">Po</div><div class="t" style="left:1283.0px;width:23.5px;text-align:right;top:209.8px;font-size:11.6px;font-weight:700;color:#2b2b2b">5.</div><div class="t" style="left:1312.2px;top:209.8px;font-size:12.2px;color:#555">Út</div><div class="t" style="left:1283.0px;width:23.5px;text-align:right;top:261.8px;font-size:11.6px;font-weight:700;color:#2b2b2b">6.</div><div class="t" style="left:1312.2px;top:261.8px;font-size:12.2px;color:#555">St</div><div class="t" style="left:1283.0px;width:23.5px;text-align:right;top:312.8px;font-size:11.6px;font-weight:700;color:#2b2b2b">7.</div><div class="t" style="left:1312.2px;top:312.8px;font-size:12.2px;color:#555">Čt</div><div class="t" style="left:1283.0px;width:23.5px;text-align:right;top:363.8px;font-size:11.6px;font-weight:700;color:#2b2b2b">8.</div><div class="t" style="left:1312.2px;top:363.8px;font-size:12.2px;color:#555">Pá</div><div class="t" style="left:1283.0px;width:23.5px;text-align:right;top:415.0px;font-size:11.6px;font-weight:700;color:#2b2b2b">9.</div><div class="t" style="left:1312.2px;top:415.0px;font-size:12.2px;color:#555">So</div><div class="t" style="left:1283.0px;width:23.5px;text-align:right;top:441.0px;font-size:11.6px;font-weight:700;color:#2b2b2b">10.</div><div class="t" style="left:1312.2px;top:441.0px;font-size:12.2px;color:#555">Ne</div><div class="t" style="left:1283.0px;width:23.5px;text-align:right;top:465.8px;font-size:11.6px;font-weight:700;color:#2b2b2b">11.</div><div class="t" style="left:1312.2px;top:465.8px;font-size:12.2px;color:#555">Po</div><div class="t" style="left:1283.0px;width:23.5px;text-align:right;top:516.8px;font-size:11.6px;font-weight:700;color:#2b2b2b">12.</div><div class="t" style="left:1312.2px;top:516.8px;font-size:12.2px;color:#555">Út</div><div class="t" style="left:1283.0px;width:23.5px;text-align:right;top:568.8px;font-size:11.6px;font-weight:700;color:#2b2b2b">13.</div><div class="t" style="left:1312.2px;top:568.8px;font-size:12.2px;color:#555">St</div><div class="t" style="left:1283.0px;width:23.5px;text-align:right;top:619.8px;font-size:11.6px;font-weight:700;color:#2b2b2b">14.</div><div class="t" style="left:1312.2px;top:619.8px;font-size:12.2px;color:#555">Čt</div><div class="t" style="left:1283.0px;width:23.5px;text-align:right;top:671.8px;font-size:11.6px;font-weight:700;color:#2b2b2b">15.</div><div class="t" style="left:1312.2px;top:671.8px;font-size:12.2px;color:#555">Pá</div><div class="t" style="left:1283.0px;width:23.5px;text-align:right;top:723.0px;font-size:11.6px;font-weight:700;color:#2b2b2b">16.</div><div class="t" style="left:1312.2px;top:723.0px;font-size:12.2px;color:#555">So</div><div class="t" style="left:1283.0px;width:23.5px;text-align:right;top:748.0px;font-size:11.6px;font-weight:700;color:#2b2b2b">17.</div><div class="t" style="left:1312.2px;top:748.0px;font-size:12.2px;color:#555">Ne</div><div class="t" style="left:1283.0px;width:23.5px;text-align:right;top:773.8px;font-size:11.6px;font-weight:700;color:#2b2b2b">18.</div><div class="t" style="left:1312.2px;top:773.8px;font-size:12.2px;color:#555">Po</div><div class="a" style="left:80.3px;top:55.1px;width:140.2px;height:17.8px;border-radius:4.5px;background:#9dc4aa;box-shadow:0 1px 2px rgba(0,0,0,0.22)"></div><div class="t" style="left:85.6px;top:59.7px;font-size:11px;color:#222">07:00 - 10:00</div><div class="a" style="left:80.3px;top:78.5px;width:140.2px;height:17.8px;border-radius:4.5px;background:#9dc4aa;box-shadow:0 1px 2px rgba(0,0,0,0.22)"></div><div class="t" style="left:85.6px;top:83.1px;font-size:11px;color:#222">11:00 - 15:00</div><div class="a" style="left:231.1px;top:55.1px;width:140.2px;height:17.8px;border-radius:4.5px;background:#9dc4aa;box-shadow:0 1px 2px rgba(0,0,0,0.22)"></div><div class="t" style="left:236.4px;top:59.7px;font-size:11px;color:#222">07:00 - 19:00</div><div class="a" style="left:231.1px;top:157.1px;width:140.2px;height:17.8px;border-radius:4.5px;background:#9dc4aa;box-shadow:0 1px 2px rgba(0,0,0,0.22)"></div><div class="t" style="left:236.4px;top:161.7px;font-size:11px;color:#222">07:00 - 19:00</div><div class="a" style="left:231.1px;top:208.1px;width:140.2px;height:17.8px;border-radius:4.5px;background:#aca5c3;box-shadow:0 1px 2px rgba(0,0,0,0.22)"></div><div class="t" style="left:236.4px;top:212.7px;font-size:11px;color:#222">12:00 - 15:30</div><div class="a" style="left:231.1px;top:260.1px;width:140.2px;height:17.8px;border-radius:4.5px;background:#9dc4aa;box-shadow:0 1px 2px rgba(0,0,0,0.22)"></div><div class="t" style="left:236.4px;top:264.70000000000005px;font-size:11px;color:#222">07:00 - 19:00</div><div class="a" style="left:231.1px;top:311.1px;width:140.2px;height:17.8px;border-radius:4.5px;background:#aca5c3;box-shadow:0 1px 2px rgba(0,0,0,0.22)"></div><div class="t" style="left:236.4px;top:315.70000000000005px;font-size:11px;color:#222">12:00 - 15:30</div><div class="a" style="left:231.1px;top:362.1px;width:140.2px;height:17.8px;border-radius:4.5px;background:#9dc4aa;box-shadow:0 1px 2px rgba(0,0,0,0.22)"></div><div class="t" style="left:236.4px;top:366.70000000000005px;font-size:11px;color:#222">07:00 - 19:00</div><div class="a" style="left:231.1px;top:464.1px;width:140.2px;height:17.8px;border-radius:4.5px;background:#9dc4aa;box-shadow:0 1px 2px rgba(0,0,0,0.22)"></div><div class="t" style="left:236.4px;top:468.70000000000005px;font-size:11px;color:#222">07:00 - 19:00</div><div class="a" style="left:231.1px;top:515.1px;width:140.2px;height:17.8px;border-radius:4.5px;background:#aca5c3;box-shadow:0 1px 2px rgba(0,0,0,0.22)"></div><div class="t" style="left:236.4px;top:519.7px;font-size:11px;color:#222">12:00 - 15:30</div><div class="a" style="left:231.1px;top:567.1px;width:140.2px;height:17.8px;border-radius:4.5px;background:#9dc4aa;box-shadow:0 1px 2px rgba(0,0,0,0.22)"></div><div class="t" style="left:236.4px;top:571.7px;font-size:11px;color:#222">07:00 - 19:00</div><div class="a" style="left:231.1px;top:618.1px;width:140.2px;height:17.8px;border-radius:4.5px;background:#aca5c3;box-shadow:0 1px 2px rgba(0,0,0,0.22)"></div><div class="t" style="left:236.4px;top:622.7px;font-size:11px;color:#222">12:00 - 15:30</div><div class="a" style="left:231.1px;top:670.1px;width:140.2px;height:17.8px;border-radius:4.5px;background:#9dc4aa;box-shadow:0 1px 2px rgba(0,0,0,0.22)"></div><div class="t" style="left:236.4px;top:674.7px;font-size:11px;color:#222">07:00 - 19:00</div><div class="a" style="left:231.1px;top:772.1px;width:140.2px;height:17.8px;border-radius:4.5px;background:#9dc4aa;box-shadow:0 1px 2px rgba(0,0,0,0.22)"></div><div class="t" style="left:236.4px;top:776.7px;font-size:11px;color:#222">07:00 - 19:00</div><div class="a" style="left:382.9px;top:55.1px;width:140.2px;height:17.8px;border-radius:4.5px;background:#aeaeae;box-shadow:0 1px 2px rgba(0,0,0,0.22)"></div><div class="t" style="left:388.2px;top:59.7px;font-size:11px;color:#222">07:00 - 12:00</div><div class="a" style="left:382.9px;top:78.5px;width:140.2px;height:17.8px;border-radius:4.5px;background:#ecc2a5;box-shadow:0 1px 2px rgba(0,0,0,0.22)"></div><div class="t" style="left:388.2px;top:83.1px;font-size:11px;color:#222">12:00 - 15:00</div><div class="a" style="left:382.9px;top:157.1px;width:140.2px;height:17.8px;border-radius:4.5px;background:#ecc2a5;box-shadow:0 1px 2px rgba(0,0,0,0.22)"></div><div class="t" style="left:388.2px;top:161.7px;font-size:11px;color:#222">12:00 - 15:00</div><div class="a" style="left:382.9px;top:208.1px;width:140.2px;height:17.8px;border-radius:4.5px;background:#aeaeae;box-shadow:0 1px 2px rgba(0,0,0,0.22)"></div><div class="t" style="left:388.2px;top:212.7px;font-size:11px;color:#222">07:00 - 12:00</div><div class="a" style="left:382.9px;top:231.5px;width:140.2px;height:17.8px;border-radius:4.5px;background:#ecc2a5;box-shadow:0 1px 2px rgba(0,0,0,0.22)"></div><div class="t" style="left:388.2px;top:236.1px;font-size:11px;color:#222">12:00 - 15:00</div><div class="a" style="left:382.9px;top:260.1px;width:140.2px;height:17.8px;border-radius:4.5px;background:#ecc2a5;box-shadow:0 1px 2px rgba(0,0,0,0.22)"></div><div class="t" style="left:388.2px;top:264.70000000000005px;font-size:11px;color:#222">12:00 - 15:00</div><div class="a" style="left:382.9px;top:311.1px;width:140.2px;height:17.8px;border-radius:4.5px;background:#aeaeae;box-shadow:0 1px 2px rgba(0,0,0,0.22)"></div><div class="t" style="left:388.2px;top:315.70000000000005px;font-size:11px;color:#222">07:00 - 12:00</div><div class="a" style="left:382.9px;top:334.5px;width:140.2px;height:17.8px;border-radius:4.5px;background:#ecc2a5;box-shadow:0 1px 2px rgba(0,0,0,0.22)"></div><div class="t" style="left:388.2px;top:339.1px;font-size:11px;color:#222">12:00 - 15:00</div><div class="a" style="left:382.9px;top:362.1px;width:140.2px;height:17.8px;border-radius:4.5px;background:#aeaeae;box-shadow:0 1px 2px rgba(0,0,0,0.22)"></div><div class="t" style="left:388.2px;top:366.70000000000005px;font-size:11px;color:#222">07:00 - 12:00</div><div class="a" style="left:382.9px;top:385.5px;width:140.2px;height:17.8px;border-radius:4.5px;background:#ecc2a5;box-shadow:0 1px 2px rgba(0,0,0,0.22)"></div><div class="t" style="left:388.2px;top:390.1px;font-size:11px;color:#222">12:00 - 15:00</div><div class="a" style="left:382.9px;top:464.1px;width:140.2px;height:17.8px;border-radius:4.5px;background:#ecc2a5;box-shadow:0 1px 2px rgba(0,0,0,0.22)"></div><div class="t" style="left:388.2px;top:468.70000000000005px;font-size:11px;color:#222">12:00 - 15:00</div><div class="a" style="left:382.9px;top:515.1px;width:140.2px;height:17.8px;border-radius:4.5px;background:#aeaeae;box-shadow:0 1px 2px rgba(0,0,0,0.22)"></div><div class="t" style="left:388.2px;top:519.7px;font-size:11px;color:#222">07:00 - 12:00</div><div class="a" style="left:382.9px;top:538.5px;width:140.2px;height:17.8px;border-radius:4.5px;background:#ecc2a5;box-shadow:0 1px 2px rgba(0,0,0,0.22)"></div><div class="t" style="left:388.2px;top:543.1px;font-size:11px;color:#222">12:00 - 15:00</div><div class="a" style="left:382.9px;top:567.1px;width:140.2px;height:17.8px;border-radius:4.5px;background:#ecc2a5;box-shadow:0 1px 2px rgba(0,0,0,0.22)"></div><div class="t" style="left:388.2px;top:571.7px;font-size:11px;color:#222">12:00 - 15:00</div><div class="a" style="left:382.9px;top:618.1px;width:140.2px;height:17.8px;border-radius:4.5px;background:#aeaeae;box-shadow:0 1px 2px rgba(0,0,0,0.22)"></div><div class="t" style="left:388.2px;top:622.7px;font-size:11px;color:#222">07:00 - 12:00</div><div class="a" style="left:382.9px;top:641.5px;width:140.2px;height:17.8px;border-radius:4.5px;background:#ecc2a5;box-shadow:0 1px 2px rgba(0,0,0,0.22)"></div><div class="t" style="left:388.2px;top:646.1px;font-size:11px;color:#222">12:00 - 15:00</div><div class="a" style="left:382.9px;top:670.1px;width:140.2px;height:17.8px;border-radius:4.5px;background:#aeaeae;box-shadow:0 1px 2px rgba(0,0,0,0.22)"></div><div class="t" style="left:388.2px;top:674.7px;font-size:11px;color:#222">07:00 - 12:00</div><div class="a" style="left:382.9px;top:693.5px;width:140.2px;height:17.8px;border-radius:4.5px;background:#ecc2a5;box-shadow:0 1px 2px rgba(0,0,0,0.22)"></div><div class="t" style="left:388.2px;top:698.1px;font-size:11px;color:#222">12:00 - 15:00</div><div class="a" style="left:382.9px;top:772.1px;width:140.2px;height:17.8px;border-radius:4.5px;background:#ecc2a5;box-shadow:0 1px 2px rgba(0,0,0,0.22)"></div><div class="t" style="left:388.2px;top:776.7px;font-size:11px;color:#222">12:00 - 15:00</div><div class="a" style="left:533.5px;top:55.1px;width:140.2px;height:17.8px;border-radius:4.5px;background:#ecc2a5;box-shadow:0 1px 2px rgba(0,0,0,0.22)"></div><div class="t" style="left:538.8px;top:59.7px;font-size:11px;color:#222">07:00 - 12:00</div><div class="a" style="left:533.5px;top:78.5px;width:140.2px;height:17.8px;border-radius:4.5px;background:#cae59b;box-shadow:0 1px 2px rgba(0,0,0,0.22)"></div><div class="t" style="left:538.8px;top:83.1px;font-size:11px;color:#222">12:00 - 15:00</div><div class="a" style="left:533.5px;top:157.1px;width:140.2px;height:17.8px;border-radius:4.5px;background:#ecc2a5;box-shadow:0 1px 2px rgba(0,0,0,0.22)"></div><div class="t" style="left:538.8px;top:161.7px;font-size:11px;color:#222">07:00 - 12:00</div><div class="a" style="left:533.5px;top:180.5px;width:140.2px;height:17.8px;border-radius:4.5px;background:#cae59b;box-shadow:0 1px 2px rgba(0,0,0,0.22)"></div><div class="t" style="left:538.8px;top:185.1px;font-size:11px;color:#222">12:00 - 15:00</div><div class="a" style="left:533.5px;top:208.1px;width:140.2px;height:17.8px;border-radius:4.5px;background:#ecc2a5;box-shadow:0 1px 2px rgba(0,0,0,0.22)"></div><div class="t" style="left:538.8px;top:212.7px;font-size:11px;color:#222">07:00 - 12:00</div><div class="a" style="left:533.5px;top:260.1px;width:140.2px;height:17.8px;border-radius:4.5px;background:#ecc2a5;box-shadow:0 1px 2px rgba(0,0,0,0.22)"></div><div class="t" style="left:538.8px;top:264.70000000000005px;font-size:11px;color:#222">07:00 - 12:00</div><div class="a" style="left:533.5px;top:283.5px;width:140.2px;height:17.8px;border-radius:4.5px;background:#cae59b;box-shadow:0 1px 2px rgba(0,0,0,0.22)"></div><div class="t" style="left:538.8px;top:288.1px;font-size:11px;color:#222">12:00 - 15:00</div><div class="a" style="left:533.5px;top:311.1px;width:140.2px;height:17.8px;border-radius:4.5px;background:#ecc2a5;box-shadow:0 1px 2px rgba(0,0,0,0.22)"></div><div class="t" style="left:538.8px;top:315.70000000000005px;font-size:11px;color:#222">07:00 - 12:00</div><div class="a" style="left:533.5px;top:362.1px;width:140.2px;height:17.8px;border-radius:4.5px;background:#ecc2a5;box-shadow:0 1px 2px rgba(0,0,0,0.22)"></div><div class="t" style="left:538.8px;top:366.70000000000005px;font-size:11px;color:#222">07:00 - 12:00</div><div class="a" style="left:533.5px;top:385.5px;width:140.2px;height:17.8px;border-radius:4.5px;background:#cae59b;box-shadow:0 1px 2px rgba(0,0,0,0.22)"></div><div class="t" style="left:538.8px;top:390.1px;font-size:11px;color:#222">12:00 - 15:00</div><div class="a" style="left:533.5px;top:464.1px;width:140.2px;height:17.8px;border-radius:4.5px;background:#ecc2a5;box-shadow:0 1px 2px rgba(0,0,0,0.22)"></div><div class="t" style="left:538.8px;top:468.70000000000005px;font-size:11px;color:#222">07:00 - 12:00</div><div class="a" style="left:533.5px;top:487.5px;width:140.2px;height:17.8px;border-radius:4.5px;background:#cae59b;box-shadow:0 1px 2px rgba(0,0,0,0.22)"></div><div class="t" style="left:538.8px;top:492.1px;font-size:11px;color:#222">12:00 - 15:00</div><div class="a" style="left:533.5px;top:515.1px;width:140.2px;height:17.8px;border-radius:4.5px;background:#ecc2a5;box-shadow:0 1px 2px rgba(0,0,0,0.22)"></div><div class="t" style="left:538.8px;top:519.7px;font-size:11px;color:#222">07:00 - 12:00</div><div class="a" style="left:533.5px;top:567.1px;width:140.2px;height:17.8px;border-radius:4.5px;background:#ecc2a5;box-shadow:0 1px 2px rgba(0,0,0,0.22)"></div><div class="t" style="left:538.8px;top:571.7px;font-size:11px;color:#222">07:00 - 12:00</div><div class="a" style="left:533.5px;top:590.5px;width:140.2px;height:17.8px;border-radius:4.5px;background:#cae59b;box-shadow:0 1px 2px rgba(0,0,0,0.22)"></div><div class="t" style="left:538.8px;top:595.1px;font-size:11px;color:#222">12:00 - 15:00</div><div class="a" style="left:533.5px;top:618.1px;width:140.2px;height:17.8px;border-radius:4.5px;background:#ecc2a5;box-shadow:0 1px 2px rgba(0,0,0,0.22)"></div><div class="t" style="left:538.8px;top:622.7px;font-size:11px;color:#222">07:00 - 12:00</div><div class="a" style="left:533.5px;top:670.1px;width:140.2px;height:17.8px;border-radius:4.5px;background:#ecc2a5;box-shadow:0 1px 2px rgba(0,0,0,0.22)"></div><div class="t" style="left:538.8px;top:674.7px;font-size:11px;color:#222">07:00 - 12:00</div><div class="a" style="left:533.5px;top:693.5px;width:140.2px;height:17.8px;border-radius:4.5px;background:#cae59b;box-shadow:0 1px 2px rgba(0,0,0,0.22)"></div><div class="t" style="left:538.8px;top:698.1px;font-size:11px;color:#222">12:00 - 15:00</div><div class="a" style="left:533.5px;top:772.1px;width:140.2px;height:17.8px;border-radius:4.5px;background:#ecc2a5;box-shadow:0 1px 2px rgba(0,0,0,0.22)"></div><div class="t" style="left:538.8px;top:776.7px;font-size:11px;color:#222">07:00 - 12:00</div><div class="a" style="left:533.5px;top:795.5px;width:140.2px;height:17.8px;border-radius:4.5px;background:#cae59b;box-shadow:0 1px 2px rgba(0,0,0,0.22)"></div><div class="t" style="left:538.8px;top:800.1px;font-size:11px;color:#222">12:00 - 18:00</div><div class="a" style="left:760.1px;top:55.1px;width:140.2px;height:17.8px;border-radius:4.5px;background:#80d4a7;box-shadow:0 1px 2px rgba(0,0,0,0.22)"></div><div class="t" style="left:765.4px;top:59.7px;font-size:11px;color:#222">07:00 - 15:30</div><div class="a" style="left:760.1px;top:157.1px;width:140.2px;height:17.8px;border-radius:4.5px;background:#80d4a7;box-shadow:0 1px 2px rgba(0,0,0,0.22)"></div><div class="t" style="left:765.4px;top:161.7px;font-size:11px;color:#222">07:00 - 15:30</div><div class="t" style="left:764.8px;top:211.29999999999998px;font-size:11.15px;color:#222">Dovolená - Celý den</div><div class="a" style="left:760.1px;top:260.1px;width:140.2px;height:17.8px;border-radius:4.5px;background:#80d4a7;box-shadow:0 1px 2px rgba(0,0,0,0.22)"></div><div class="t" style="left:765.4px;top:264.70000000000005px;font-size:11px;color:#222">07:00 - 15:30</div><div class="a" style="left:760.1px;top:311.1px;width:140.2px;height:17.8px;border-radius:4.5px;background:#aeaeae;box-shadow:0 1px 2px rgba(0,0,0,0.22)"></div><div class="t" style="left:765.4px;top:315.70000000000005px;font-size:11px;color:#222">08:00 - 16:30</div><div class="a" style="left:760.1px;top:362.1px;width:140.2px;height:17.8px;border-radius:4.5px;background:#80d4a7;box-shadow:0 1px 2px rgba(0,0,0,0.22)"></div><div class="t" style="left:765.4px;top:366.70000000000005px;font-size:11px;color:#222">07:00 - 15:30</div><div class="a" style="left:760.1px;top:464.1px;width:140.2px;height:17.8px;border-radius:4.5px;background:#80d4a7;box-shadow:0 1px 2px rgba(0,0,0,0.22)"></div><div class="t" style="left:765.4px;top:468.70000000000005px;font-size:11px;color:#222">07:00 - 15:30</div><div class="t" style="left:764.8px;top:518.3000000000001px;font-size:11.15px;color:#222">Lékař</div><div class="a" style="left:760.1px;top:536.1px;width:140.2px;height:17.8px;border-radius:4.5px;background:#aeaeae;box-shadow:0 1px 2px rgba(0,0,0,0.22)"></div><div class="t" style="left:765.4px;top:540.7px;font-size:11px;color:#222">12:00 - 15:30</div><div class="a" style="left:760.1px;top:567.1px;width:140.2px;height:17.8px;border-radius:4.5px;background:#80d4a7;box-shadow:0 1px 2px rgba(0,0,0,0.22)"></div><div class="t" style="left:765.4px;top:571.7px;font-size:11px;color:#222">07:00 - 15:30</div><div class="a" style="left:760.1px;top:618.1px;width:140.2px;height:17.8px;border-radius:4.5px;background:#aeaeae;box-shadow:0 1px 2px rgba(0,0,0,0.22)"></div><div class="t" style="left:765.4px;top:622.7px;font-size:11px;color:#222">08:00 - 16:30</div><div class="a" style="left:760.1px;top:670.1px;width:140.2px;height:17.8px;border-radius:4.5px;background:#80d4a7;box-shadow:0 1px 2px rgba(0,0,0,0.22)"></div><div class="t" style="left:765.4px;top:674.7px;font-size:11px;color:#222">07:00 - 15:30</div><div class="a" style="left:760.1px;top:772.1px;width:140.2px;height:17.8px;border-radius:4.5px;background:#80d4a7;box-shadow:0 1px 2px rgba(0,0,0,0.22)"></div><div class="t" style="left:765.4px;top:776.7px;font-size:11px;color:#222">07:00 - 15:30</div><div class="a" style="left:911.3px;top:55.1px;width:140.2px;height:17.8px;border-radius:4.5px;background:#aeaeae;box-shadow:0 1px 2px rgba(0,0,0,0.22)"></div><div class="t" style="left:916.5999999999999px;top:59.7px;font-size:11px;color:#222">09:00 - 17:30</div><div class="t" style="left:915.8px;top:160.29999999999998px;font-size:11.15px;color:#222">Svatba</div><div class="a" style="left:911.3px;top:208.1px;width:140.2px;height:17.8px;border-radius:4.5px;background:#80d4a7;box-shadow:0 1px 2px rgba(0,0,0,0.22)"></div><div class="t" style="left:916.5999999999999px;top:212.7px;font-size:11px;color:#222">12:00 - 18:00</div><div class="a" style="left:911.3px;top:260.1px;width:140.2px;height:17.8px;border-radius:4.5px;background:#aeaeae;box-shadow:0 1px 2px rgba(0,0,0,0.22)"></div><div class="t" style="left:916.5999999999999px;top:264.70000000000005px;font-size:11px;color:#222">09:00 - 17:30</div><div class="a" style="left:911.3px;top:311.1px;width:140.2px;height:17.8px;border-radius:4.5px;background:#80d4a7;box-shadow:0 1px 2px rgba(0,0,0,0.22)"></div><div class="t" style="left:916.5999999999999px;top:315.70000000000005px;font-size:11px;color:#222">12:00 - 18:00</div><div class="t" style="left:915.8px;top:365.3px;font-size:11.15px;color:#222">Nemoc</div><div class="a" style="left:911.3px;top:464.1px;width:140.2px;height:17.8px;border-radius:4.5px;background:#aeaeae;box-shadow:0 1px 2px rgba(0,0,0,0.22)"></div><div class="t" style="left:916.5999999999999px;top:468.70000000000005px;font-size:11px;color:#222">09:00 - 17:30</div><div class="a" style="left:911.3px;top:515.1px;width:140.2px;height:17.8px;border-radius:4.5px;background:#80d4a7;box-shadow:0 1px 2px rgba(0,0,0,0.22)"></div><div class="t" style="left:916.5999999999999px;top:519.7px;font-size:11px;color:#222">12:00 - 18:00</div><div class="a" style="left:911.3px;top:567.1px;width:140.2px;height:17.8px;border-radius:4.5px;background:#aeaeae;box-shadow:0 1px 2px rgba(0,0,0,0.22)"></div><div class="t" style="left:916.5999999999999px;top:571.7px;font-size:11px;color:#222">09:00 - 17:30</div><div class="a" style="left:911.3px;top:618.1px;width:140.2px;height:17.8px;border-radius:4.5px;background:#80d4a7;box-shadow:0 1px 2px rgba(0,0,0,0.22)"></div><div class="t" style="left:916.5999999999999px;top:622.7px;font-size:11px;color:#222">12:00 - 18:00</div><div class="a" style="left:911.3px;top:670.1px;width:140.2px;height:17.8px;border-radius:4.5px;background:#aeaeae;box-shadow:0 1px 2px rgba(0,0,0,0.22)"></div><div class="t" style="left:916.5999999999999px;top:674.7px;font-size:11px;color:#222">09:00 - 17:30</div><div class="a" style="left:911.3px;top:772.1px;width:140.2px;height:17.8px;border-radius:4.5px;background:#aeaeae;box-shadow:0 1px 2px rgba(0,0,0,0.22)"></div><div class="t" style="left:916.5999999999999px;top:776.7px;font-size:11px;color:#222">09:00 - 17:30</div><div class="a" style="left:1137.9px;top:55.1px;width:140.2px;height:17.8px;border-radius:4.5px;background:#c89be9;box-shadow:0 1px 2px rgba(0,0,0,0.22)"></div><div class="t" style="left:1143.2px;top:59.7px;font-size:11px;color:#222">07:00 - 12:00</div><div class="t" style="left:1142.8px;top:160.29999999999998px;font-size:11.15px;color:#222">Školení</div><div class="t" style="left:1142.8px;top:211.29999999999998px;font-size:11.15px;color:#222">Školení</div><div class="t" style="left:1142.8px;top:263.3px;font-size:11.15px;color:#222">Školení</div><div class="t" style="left:1142.8px;top:314.3px;font-size:11.15px;color:#222">Školení</div><div class="t" style="left:1142.8px;top:365.3px;font-size:11.15px;color:#222">Školení</div><div class="a" style="left:1137.9px;top:464.1px;width:140.2px;height:17.8px;border-radius:4.5px;background:#c89be9;box-shadow:0 1px 2px rgba(0,0,0,0.22)"></div><div class="t" style="left:1143.2px;top:468.70000000000005px;font-size:11px;color:#222">07:00 - 12:00</div><div class="a" style="left:1137.9px;top:567.1px;width:140.2px;height:17.8px;border-radius:4.5px;background:#c89be9;box-shadow:0 1px 2px rgba(0,0,0,0.22)"></div><div class="t" style="left:1143.2px;top:571.7px;font-size:11px;color:#222">07:00 - 12:00</div><div class="a" style="left:1137.9px;top:670.1px;width:140.2px;height:17.8px;border-radius:4.5px;background:#c89be9;box-shadow:0 1px 2px rgba(0,0,0,0.22)"></div><div class="t" style="left:1143.2px;top:674.7px;font-size:11px;color:#222">07:00 - 12:00</div><div class="a" style="left:1137.9px;top:772.1px;width:140.2px;height:17.8px;border-radius:4.5px;background:#c89be9;box-shadow:0 1px 2px rgba(0,0,0,0.22)"></div><div class="t" style="left:1143.2px;top:776.7px;font-size:11px;color:#222">07:00 - 12:00</div><div class="a" style="left:1365.1px;top:55.1px;width:140.2px;height:17.8px;border-radius:4.5px;background:#aca5c3;box-shadow:0 1px 2px rgba(0,0,0,0.22)"></div><div class="t" style="left:1370.3999999999999px;top:59.7px;font-size:11px;color:#222">07:00 - 15:30</div><div class="a" style="left:1365.1px;top:157.1px;width:140.2px;height:17.8px;border-radius:4.5px;background:#aca5c3;box-shadow:0 1px 2px rgba(0,0,0,0.22)"></div><div class="t" style="left:1370.3999999999999px;top:161.7px;font-size:11px;color:#222">07:00 - 15:30</div><div class="a" style="left:1365.1px;top:208.1px;width:140.2px;height:17.8px;border-radius:4.5px;background:#aca5c3;box-shadow:0 1px 2px rgba(0,0,0,0.22)"></div><div class="t" style="left:1370.3999999999999px;top:212.7px;font-size:11px;color:#222">07:00 - 15:30</div><div class="a" style="left:1365.1px;top:260.1px;width:140.2px;height:17.8px;border-radius:4.5px;background:#aca5c3;box-shadow:0 1px 2px rgba(0,0,0,0.22)"></div><div class="t" style="left:1370.3999999999999px;top:264.70000000000005px;font-size:11px;color:#222">07:00 - 15:30</div><div class="a" style="left:1365.1px;top:311.1px;width:140.2px;height:17.8px;border-radius:4.5px;background:#aca5c3;box-shadow:0 1px 2px rgba(0,0,0,0.22)"></div><div class="t" style="left:1370.3999999999999px;top:315.70000000000005px;font-size:11px;color:#222">07:00 - 15:30</div><div class="a" style="left:1365.1px;top:362.1px;width:140.2px;height:17.8px;border-radius:4.5px;background:#aca5c3;box-shadow:0 1px 2px rgba(0,0,0,0.22)"></div><div class="t" style="left:1370.3999999999999px;top:366.70000000000005px;font-size:11px;color:#222">07:00 - 15:30</div><div class="a" style="left:1365.1px;top:464.1px;width:140.2px;height:17.8px;border-radius:4.5px;background:#aca5c3;box-shadow:0 1px 2px rgba(0,0,0,0.22)"></div><div class="t" style="left:1370.3999999999999px;top:468.70000000000005px;font-size:11px;color:#222">07:00 - 15:30</div><div class="a" style="left:1365.1px;top:515.1px;width:140.2px;height:17.8px;border-radius:4.5px;background:#aca5c3;box-shadow:0 1px 2px rgba(0,0,0,0.22)"></div><div class="t" style="left:1370.3999999999999px;top:519.7px;font-size:11px;color:#222">07:00 - 15:30</div><div class="a" style="left:1365.1px;top:567.1px;width:140.2px;height:17.8px;border-radius:4.5px;background:#aca5c3;box-shadow:0 1px 2px rgba(0,0,0,0.22)"></div><div class="t" style="left:1370.3999999999999px;top:571.7px;font-size:11px;color:#222">07:00 - 15:30</div><div class="a" style="left:1365.1px;top:618.1px;width:140.2px;height:17.8px;border-radius:4.5px;background:#aca5c3;box-shadow:0 1px 2px rgba(0,0,0,0.22)"></div><div class="t" style="left:1370.3999999999999px;top:622.7px;font-size:11px;color:#222">07:00 - 15:30</div><div class="a" style="left:1365.1px;top:670.1px;width:140.2px;height:17.8px;border-radius:4.5px;background:#aca5c3;box-shadow:0 1px 2px rgba(0,0,0,0.22)"></div><div class="t" style="left:1370.3999999999999px;top:674.7px;font-size:11px;color:#222">07:00 - 15:30</div><div class="a" style="left:1365.1px;top:772.1px;width:140.2px;height:17.8px;border-radius:4.5px;background:#aca5c3;box-shadow:0 1px 2px rgba(0,0,0,0.22)"></div><div class="t" style="left:1370.3999999999999px;top:776.7px;font-size:11px;color:#222">07:00 - 15:30</div></div><div class="t" style="left:1313.5px;top:30px;font-size:13.3px;color:#fff">PharmDr. Ondřej Straka</div><div class="a" style="left:1518.7px;top:19px;width:1px;height:36px;background:rgba(80,220,190,0.45)"></div><div class="a" style="left:1586.3px;top:19px;width:1px;height:36px;background:rgba(80,220,190,0.45)"></div><div class="a" style="left:1649.4px;top:19px;width:1px;height:36px;background:rgba(80,220,190,0.45)"></div><div class="a" style="left:1712.5px;top:19px;width:1px;height:36px;background:rgba(80,220,190,0.45)"></div><div class="a" style="left:1775.3px;top:19px;width:1px;height:36px;background:rgba(80,220,190,0.45)"></div><div class="a" style="left:1837.9px;top:19px;width:1px;height:36px;background:rgba(80,220,190,0.45)"></div><svg class="a" style="left:1470px;top:18px" width="36" height="36" viewBox="0 0 36 36"><g fill="none" stroke="#25434a" stroke-width="1.5" stroke-linecap="round" stroke-linejoin="round"><path d="M16.2 16.8 A6.7 6.7 0 1 1 19.3 20.5 Q18.3 20.9 17.7 21.6"/><path d="M16.2 16.8 L9 24 Q8.2 24.8 8.2 25.8 V28.2 H11.4 L12.2 26.9 L14.4 26.1 V24.5"/><circle cx="23.5" cy="13.4" r="1.5"/></g></svg><svg class="a" style="left:1536px;top:24px" width="30" height="26" viewBox="0 0 30 26"><path d="M3 2.8 H13.6 L16.5 7.3 H27.5 V22.7 H2.9 V7.5" fill="none" stroke="#27474c" stroke-width="1.6"/><path d="M13.4 17.4 V11.6 L17.9 17.4 V11.6" fill="none" stroke="#5a3128" stroke-width="1.3" stroke-linejoin="bevel"/></svg><svg class="a" style="left:1603px;top:24px" width="30" height="26" viewBox="0 0 30 26"><path d="M3 2.8 H13.6 L16.5 7.3 H27.5 V22.7 H2.9 V7.5" fill="none" stroke="#27474c" stroke-width="1.6"/></svg><svg class="a" style="left:1670px;top:24px" width="26" height="26" viewBox="0 0 26 26"><path d="M2 2.8 H22.5 V22.8 H2 V8.5" fill="none" stroke="#27474c" stroke-width="1.6"/></svg><svg class="a" style="left:1728px;top:22px" width="32" height="32" viewBox="0 0 32 32"><g fill="none" stroke="#0f282b" stroke-width="1.6" stroke-linecap="round" stroke-linejoin="round"><circle cx="13.9" cy="12.5" r="4.4"/><path d="M15.3 8.2 A4.3 4.3 0 1 1 21.2 13.6"/><path d="M8.3 18.1 Q5.9 20.5 5.9 23.9 H22 Q21.6 19.3 18 16.9"/><path d="M19.6 14.2 Q25.8 16.1 26.2 21.2 H22"/></g></svg><svg class="a" style="left:1795.5px;top:24.3px" width="25" height="25" viewBox="0 0 25 25"><polygon points="12.50,1.00 12.95,1.05 13.39,1.20 13.81,1.43 14.21,1.72 14.58,2.05 14.92,2.40 15.26,2.73 15.58,3.03 15.91,3.27 16.25,3.45 16.62,3.56 17.02,3.62 17.46,3.64 17.93,3.64 18.42,3.64 18.91,3.67 19.40,3.74 19.86,3.88 20.28,4.09 20.63,4.37 20.91,4.72 21.12,5.14 21.26,5.60 21.33,6.09 21.36,6.58 21.36,7.07 21.36,7.54 21.38,7.98 21.44,8.38 21.55,8.75 21.73,9.09 21.97,9.42 22.27,9.74 22.60,10.08 22.95,10.42 23.28,10.79 23.57,11.19 23.80,11.61 23.95,12.05 24.00,12.50 23.95,12.95 23.80,13.39 23.57,13.81 23.28,14.21 22.95,14.58 22.60,14.92 22.27,15.26 21.97,15.58 21.73,15.91 21.55,16.25 21.44,16.62 21.38,17.02 21.36,17.46 21.36,17.93 21.36,18.42 21.33,18.91 21.26,19.40 21.12,19.86 20.91,20.28 20.63,20.63 20.28,20.91 19.86,21.12 19.40,21.26 18.91,21.33 18.42,21.36 17.93,21.36 17.46,21.36 17.02,21.38 16.62,21.44 16.25,21.55 15.91,21.73 15.58,21.97 15.26,22.27 14.92,22.60 14.58,22.95 14.21,23.28 13.81,23.57 13.39,23.80 12.95,23.95 12.50,24.00 12.05,23.95 11.61,23.80 11.19,23.57 10.79,23.28 10.42,22.95 10.08,22.60 9.74,22.27 9.42,21.97 9.09,21.73 8.75,21.55 8.38,21.44 7.98,21.38 7.54,21.36 7.07,21.36 6.58,21.36 6.09,21.33 5.60,21.26 5.14,21.12 4.72,20.91 4.37,20.63 4.09,20.28 3.88,19.86 3.74,19.40 3.67,18.91 3.64,18.42 3.64,17.93 3.64,17.46 3.62,17.02 3.56,16.62 3.45,16.25 3.27,15.91 3.03,15.58 2.73,15.26 2.40,14.92 2.05,14.58 1.72,14.21 1.43,13.81 1.20,13.39 1.05,12.95 1.00,12.50 1.05,12.05 1.20,11.61 1.43,11.19 1.72,10.79 2.05,10.42 2.40,10.08 2.73,9.74 3.03,9.42 3.27,9.09 3.45,8.75 3.56,8.38 3.62,7.98 3.64,7.54 3.64,7.07 3.64,6.58 3.67,6.09 3.74,5.60 3.88,5.14 4.09,4.72 4.37,4.37 4.72,4.09 5.14,3.88 5.60,3.74 6.09,3.67 6.58,3.64 7.07,3.64 7.54,3.64 7.98,3.62 8.38,3.56 8.75,3.45 9.09,3.27 9.42,3.03 9.74,2.73 10.08,2.40 10.42,2.05 10.79,1.72 11.19,1.43 11.61,1.20 12.05,1.05" fill="none" stroke="#27474c" stroke-width="1.5"/><path d="M13.26 16.73 A4.4 4.4 0 1 1 16.83 13.16" fill="none" stroke="#27474c" stroke-width="1.5" stroke-linecap="round"/></svg><svg class="a" style="left:1859px;top:25px" width="23" height="23" viewBox="0 0 23 23"><path d="M1.5 1.7 L8.4 8.7 M11.2 11.5 L20.6 20.8 M20.6 1.7 L1.5 20.8" fill="none" stroke="#27474c" stroke-width="1.6" stroke-linecap="round"/></svg><svg class="a" style="left:0;top:0;z-index:20" width="1920" height="1080"><line x1="1740" y1="170" x2="1858" y2="50.5" stroke="#000" stroke-width="2"/></svg><div class="a" style="left:1329px;top:169px;width:412px;height:136px;border:2.4px solid #000;background:rgba(255,192,0,0.8);z-index:21"></div><div class="t" style="left:1329px;width:412px;text-align:center;top:195.5px;font-size:32px;line-height:43px;color:#000;z-index:22;white-space:normal">Tlačítko odhlášení a<br>uzamknutí</div></body></html>
